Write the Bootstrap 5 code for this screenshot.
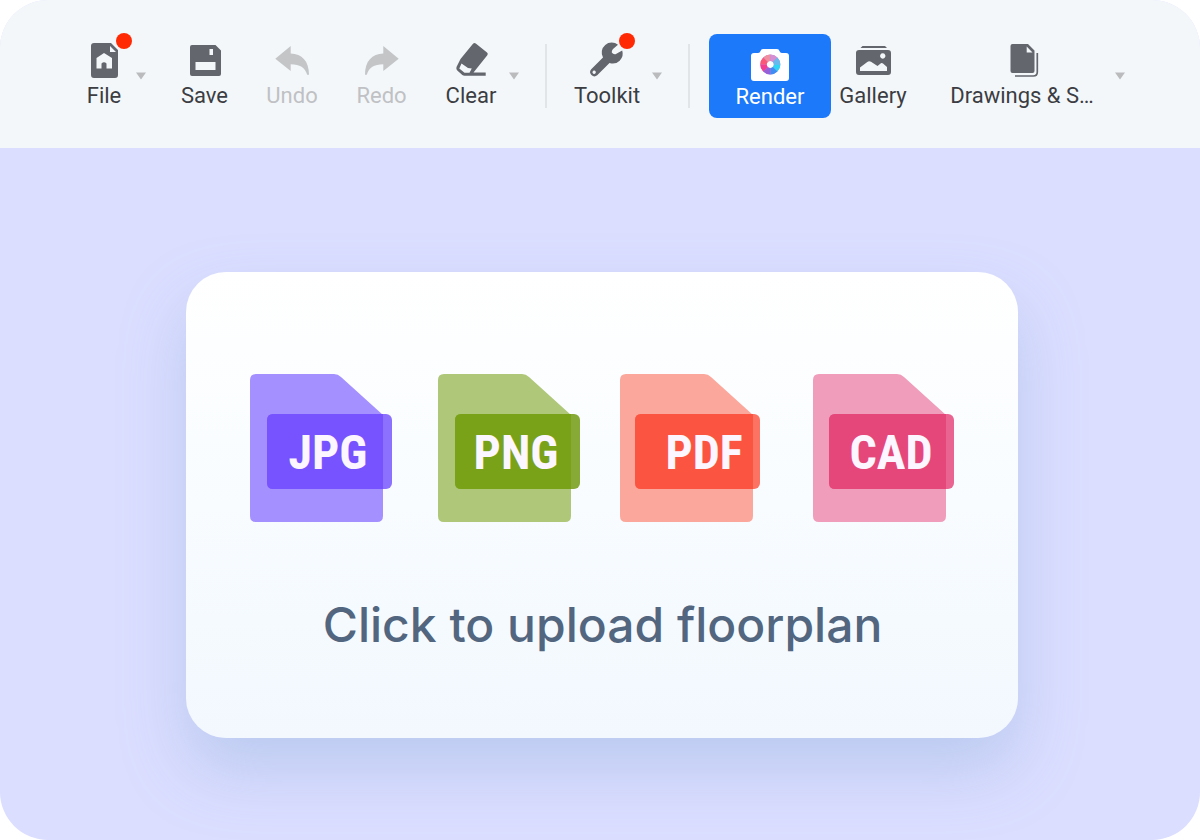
<!DOCTYPE html>
<html lang="en">
<head>
<meta charset="utf-8">
<meta name="viewport" content="width=device-width, initial-scale=1">
<title>Floorplan editor</title>
<link href="https://cdn.jsdelivr.net/npm/bootstrap@5.3.0/dist/css/bootstrap.min.css" rel="stylesheet">
<style>
  body { background: #fff; font-family: Roboto, "Liberation Sans", sans-serif; }
  .app-shell { min-height: 100vh; border-radius: 48px; background: #dbdeff; }
  .app-bar {
    background: #f4f7fa; height: 148px; padding-top: 34px; color: #3b3d42;
    display: grid; align-items: start;
    grid-template-columns: 80fr 48fr 26fr 101fr 74fr 105fr 74fr 12fr 25fr 2fr 20fr 80fr 20fr 21fr 2fr 19fr 122fr 5fr 74fr 30fr 164fr 5fr 22fr 69fr;
  }
  .tool {
    height: 84px; padding: 7px 0; border: 0; background: none; color: inherit; border-radius: 8px;
    display: flex; flex-direction: column; align-items: center;
    min-width: 0; white-space: nowrap; font-size: 22px; line-height: 30px;
  }
  .tool svg { width: 56px; height: 40px; flex: none; color: #63676d; overflow: visible; }
  .tool:disabled { color: #bfc1c4; }
  .tool:disabled svg { color: #c3c5c7; }
  .tool-main { background: #1b79fa; color: #fff; line-height: 32px; }
  .icon-wrap { height: 40px; display: flex; }
  .dot { position: absolute; top: -8px; right: 0; width: 16px; height: 16px; border-radius: 50%; background: #ff2a04; }
  .caret-btn { border: 0; padding: 38px 0 0; background: none; display: flex; justify-content: center; min-width: 0; }
  .caret-btn svg { width: 12px; height: 8px; flex: none; }
  .rule { height: 64px; margin-top: 10px; background: #e2e5e8; }
  .c2 { grid-column: 2; } .c10 { grid-column: 10; } .c12 { grid-column: 12; } .c15 { grid-column: 15; }
  .c17 { grid-column: 17; } .c19 { grid-column: 19; } .c21 { grid-column: 21; } .c23 { grid-column: 23; }
  .upload {
    width: 100%; max-width: 832px; margin-top: 124px; border: 0; border-radius: 40px; padding: 101px 63px 81px 64px;
    background: linear-gradient(#fff, #f8fcff 50%, #f2f8fe);
    box-shadow: 0 32px 64px rgba(125, 165, 210, .34);
  }
  .formats { display: grid; grid-template-columns: 188fr 182fr 193fr 142fr; }
  .formats svg { width: 142px; height: 150px; }
  .formats text { font: bold 48px "Roboto Condensed", "Open Sans Condensed", "Noto Sans Condensed", "Liberation Sans", sans-serif; text-anchor: middle; fill: #fbf6ff; }
  .caption { font: 500 48px/64px Inter, sans-serif; color: #52667f; margin-top: 70px; }
</style>
</head>
<body>
<div class="app-shell overflow-hidden">
  <header class="app-bar" role="toolbar" aria-label="Editor tools">
    <button class="tool c2" type="button">
      <span class="icon-wrap position-relative">
        <svg viewBox="0 0 56 40" aria-hidden="true"><path fill="currentColor" fill-rule="evenodd" d="M18 2H35L42 9V34Q42 37 39 37H18Q15 37 15 34V5Q15 2 18 2ZM34 5V11H40ZM28 12L20.500 17V27.500H25.500V22.500Q28 20 30.500 22.500V27.500H36V17Z"/></svg>
        <span class="dot"></span>
      </span>File</button>
    <button class="caret-btn" type="button" aria-label="File menu"><svg viewBox="0 0 12 8"><path d="M1 .5H11L6 7.500Z" fill="#b9bbbd"/></svg></button>
    <button class="tool" type="button">
      <svg viewBox="0 0 56 40" aria-hidden="true"><path fill="currentColor" fill-rule="evenodd" d="M15 4H38.500L44 9.500V33Q44 35 42 35H15Q13 35 13 33V6Q13 4 15 4ZM32.500 8V14H36V8ZM18.500 21V29H38.500V21Z"/></svg>Save</button>
    <button class="tool" type="button" disabled>
      <svg viewBox="0 0 56 40" aria-hidden="true"><path fill="currentColor" d="M11.300 17.700L26.700 5V12.500C38 13 45 20 45 33.700H43.200C41 26.500 36 23.200 26.700 23.200V30Z"/></svg>Undo</button>
    <button class="tool" type="button" disabled>
      <svg viewBox="0 0 56 40" aria-hidden="true"><path fill="currentColor" d="M44.700 17.700L29.300 5V12.500C18 13 11 20 11 33.700H12.800C15 26.500 20 23.200 29.300 23.200V30Z"/></svg>Redo</button>
    <button class="tool" type="button">
      <svg viewBox="0 0 56 40" aria-hidden="true"><path fill="currentColor" fill-rule="evenodd" d="M30 2.800Q31.300 1.300 32.800 2.500L44 11.500Q45.500 12.800 44.300 14.300L30.500 31.500H42.700V34.700H21.500Q20.300 34.700 19.300 33.900L14.300 29.500Q12.800 28 13.500 26L17.500 18ZM18.500 22.500L16.300 27.500L21.500 31.700H26.500L28.800 27.500L25 27Z"/></svg>Clear</button>
    <button class="caret-btn" type="button" aria-label="Clear menu"><svg viewBox="0 0 12 8"><path d="M1 .5H11L6 7.500Z" fill="#b9bbbd"/></svg></button>
    <span class="rule c10"></span>
    <button class="tool c12" type="button">
      <span class="icon-wrap position-relative">
        <svg viewBox="0 0 56 40" aria-hidden="true"><path fill="currentColor" fill-rule="evenodd" d="M39 3.800A10 10 0 0 0 24 16.500L12.200 28.200A4.300 4.300 0 0 0 18.200 34.300L30.500 22A10 10 0 0 0 43.200 9.500L36.500 13.200Q34 13.500 32.800 11.500Q32.500 9.500 34 8ZM15.200 29.500A1.700 1.700 0 1 1 15.100 29.500Z"/></svg>
        <span class="dot"></span>
      </span>Toolkit</button>
    <button class="caret-btn" type="button" aria-label="Toolkit menu"><svg viewBox="0 0 12 8"><path d="M1 .5H11L6 7.500Z" fill="#b9bbbd"/></svg></button>
    <span class="rule c15"></span>
    <button class="tool tool-main c17" type="button">
      <svg viewBox="0 0 56 40" aria-hidden="true">
        <path fill="#fff" d="M12 12H16Q18 12 18.500 10Q19 8 21 8H35Q37 8 37.500 10Q38 12 40 12H44Q47 12 47 15V37Q47 40 44 40H12Q9 40 9 37V15Q9 12 12 12Z"/>
        <g fill="none" stroke-width="6.500" transform="translate(28.300 23.500)">
          <circle r="6.800" stroke="#b98fd8"/>
          <path stroke="#ef8fa0" d="M-4.800 -4.800A6.800 6.800 0 0 1 0 -6.800"/>
          <path stroke="#d58fd2" d="M0 -6.800A6.800 6.800 0 0 1 4.800 -4.800"/>
          <path stroke="#69b9ee" d="M4.800 -4.800A6.800 6.800 0 0 1 6.800 0"/>
          <path stroke="#30d5f5" d="M6.800 0A6.800 6.800 0 0 1 4.800 4.800"/>
          <path stroke="#3e8df4" d="M4.800 4.800A6.800 6.800 0 0 1 0 6.800"/>
          <path stroke="#9661d8" d="M0 6.800A6.800 6.800 0 0 1 -4.800 4.800"/>
          <path stroke="#f43d90" d="M-4.800 4.800A6.800 6.800 0 0 1 -6.800 0"/>
          <path stroke="#fb5879" d="M-6.800 0A6.800 6.800 0 0 1 -4.800 -4.800"/>
        </g>
      </svg>Render</button>
    <button class="tool c19" type="button">
      <svg viewBox="0 0 56 40" aria-hidden="true"><path fill="currentColor" fill-rule="evenodd" d="M17.500 5H40L42 7H15.500ZM14 9H43Q46 9 46 12V31Q46 34 43 34H14Q11 34 11 31V12Q11 9 14 9ZM15 30H42V26L38 22.500Q36.500 21.500 35 23L32.500 25L26 20.800Q24 19.800 22.300 21L15 26.500ZM37.700 12.300A2.700 2.700 0 1 0 37.800 12.300Z"/></svg>Gallery</button>
    <button class="tool c21" type="button">
      <svg viewBox="0 0 56 40" aria-hidden="true"><path fill="currentColor" fill-rule="evenodd" d="M18.500 3H34L40.500 9.500V30Q40.500 32 38.500 32H18.500Q16.500 32 16.500 30V5Q16.500 3 18.500 3ZM32.700 5.500V11.500H38.500Z"/><path d="M43.300 12V31Q43.300 35 39.300 35H21" fill="none" stroke="currentColor" stroke-width="1.700"/></svg>Drawings &amp; S…</button>
    <button class="caret-btn c23" type="button" aria-label="Drawings menu"><svg viewBox="0 0 12 8"><path d="M1 .5H11L6 7.500Z" fill="#b9bbbd"/></svg></button>
  </header>

  <main class="d-flex justify-content-center ps-1">
    <button class="upload" type="button">
      <span class="formats">
        <svg viewBox="0 0 142 150"><path fill="#a590ff" d="M6 1H84Q88 1 91 4L133 42V143Q133 149 127 149H6Q0 149 0 143V7Q0 1 6 1Z"/><rect x="17" y="41" width="125" height="75" rx="6" fill="#8c70fe"/><path fill="#7752ff" d="M23 41H133V116H23Q17 116 17 110V47Q17 41 23 41Z"/><text x="78" y="96">JPG</text></svg>
        <svg viewBox="0 0 142 150"><path fill="#afc778" d="M6 1H84Q88 1 91 4L133 42V143Q133 149 127 149H6Q0 149 0 143V7Q0 1 6 1Z"/><rect x="17" y="41" width="125" height="75" rx="6" fill="#87a936"/><path fill="#7aa219" d="M23 41H133V116H23Q17 116 17 110V47Q17 41 23 41Z"/><text x="78" y="96">PNG</text></svg>
        <svg viewBox="0 0 142 150"><path fill="#fba79c" d="M6 1H84Q88 1 91 4L133 42V143Q133 149 127 149H6Q0 149 0 143V7Q0 1 6 1Z"/><rect x="15" y="41" width="125" height="75" rx="6" fill="#fc7263"/><path fill="#fb5541" d="M21 41H133V116H21Q15 116 15 110V47Q15 41 21 41Z"/><text x="84" y="96">PDF</text></svg>
        <svg viewBox="0 0 142 150"><path fill="#f09dbb" d="M6 1H84Q88 1 91 4L133 42V143Q133 149 127 149H6Q0 149 0 143V7Q0 1 6 1Z"/><rect x="16" y="41" width="125" height="75" rx="6" fill="#ea6491"/><path fill="#e6477a" d="M22 41H133V116H22Q16 116 16 110V47Q16 41 22 41Z"/><text x="78" y="96">CAD</text></svg>
      </span>
      <span class="caption d-block">Click to upload floorplan</span>
    </button>
  </main>
</div>
<script src="https://cdn.jsdelivr.net/npm/bootstrap@5.3.0/dist/js/bootstrap.bundle.min.js"></script>
</body>
</html>
